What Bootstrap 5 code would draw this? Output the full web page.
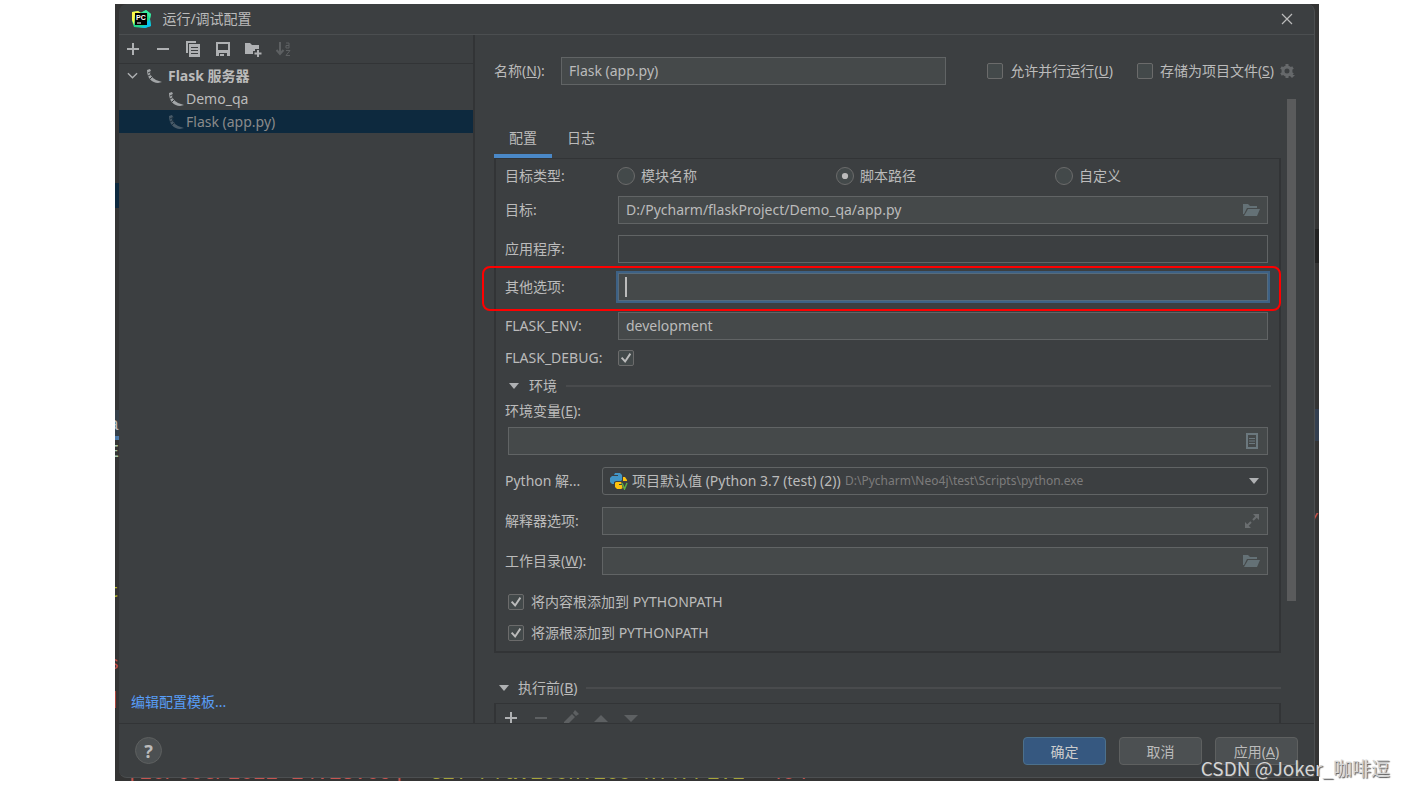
<!DOCTYPE html>
<html lang="zh-CN">
<head>
<meta charset="utf-8">
<meta name="viewport" content="width=device-width, initial-scale=1">
<title>运行/调试配置</title>
<link href="https://cdn.jsdelivr.net/npm/bootstrap@5.3.0/dist/css/bootstrap.min.css" rel="stylesheet">
<script src="https://cdn.jsdelivr.net/npm/bootstrap@5.3.0/dist/js/bootstrap.bundle.min.js" defer></script>
<style>
  :root { --panel: #3c3f41; --line: #323436; --edge: #616465; --field: #45494a; --ink: #bbbbbb; --dim: #8a8a8a; --font: "Noto Sans", "Noto Sans CJK SC", sans-serif; }
  body { background: #fff; color: var(--ink); font: 14px/20px var(--font); }
  .page-shell { padding: 4px 85px 7px 115px; min-height: 100vh; }
  .backdrop { background: #343434; padding: 0 4px 3px; min-height: calc(100vh - 11px); overflow: hidden; }
  .dialog-win { background: var(--panel); border-radius: 8px; height: calc(100vh - 14px); min-height: 560px; border: 0 solid #4c4f51; border-width: 0 1px 1px 0; z-index: 1; }

  /* Editor content showing round the edge of the dialog */
  .peek { position: absolute; display: flex; justify-content: flex-end; font: 18px/20px "Liberation Mono", monospace; white-space: pre; width: 4px; overflow: hidden; }
  .peek-l { left: 0; }
  .peek-r { right: 0; }
  .console-line { position: absolute; left: 12px; bottom: -5px; font: 21px/24px "Liberation Mono", monospace; white-space: pre; color: #a8a53a; }
  .red { color: #c75450; }

  .title-bar { height: 31px; flex: none; padding: 0 20px 0 12px; border-bottom: 1px solid #4b4e50; }
  .plain-btn { background: none; border: 0; padding: 0; color: inherit; display: flex; line-height: 0; }
  .side-pane { flex: 0 0 356px; border-right: 2px solid var(--line); padding-bottom: 11px; }
  .tool-strip { height: 29px; padding: 0 6px; gap: 14px; border-bottom: 1px solid var(--line); }
  .tree-row { height: 23px; line-height: 23px; }
  .tree-row.chosen { background: #0d293e; color: var(--dim); }
  .tree-child { padding-left: 49px; }
  .edit-link { color: #589df6; text-decoration: none; padding-left: 12px; }

  .main-pane { padding: 22px 18px 0 19px; overflow: hidden; min-width: 0; min-height: 0; }
  .name-label { flex: 0 0 67px; }
  .name-box { margin-right: 41px; }
  .field { background: var(--field); border: 1px solid var(--edge); border-radius: 0; color: var(--ink); font: 14px/20px var(--font); height: 28px; padding: 0 7px 2px; min-width: 0; width: 100%; }
  .field.bare { background: var(--panel); }
  .field:focus { outline: none; }
  .field.lit { outline: 2px solid #3d6185; outline-offset: 0; border-color: #566b7c; }
  .field-icon { position: absolute; right: 8px; top: 6px; }
  .form-check-input.tick { width: 16px; height: 16px; margin: 0 7px 0 0; background-color: #43494a; border: 1px solid #6b6b6b; border-radius: 2px; flex: none; box-shadow: none; }
  .form-check-input.tick[type=radio] { width: 18px; height: 18px; margin-right: 6px; border-radius: 50%; }
  .form-check-input.tick:checked { background-color: #43494a; border-color: #6b6b6b; }
  .form-check-input.tick[type=checkbox]:checked { background-image: url("data:image/svg+xml,%3csvg xmlns='http://www.w3.org/2000/svg' viewBox='0 0 16 16'%3e%3cpath d='M3 7.500l4 4.500L13 3' fill='none' stroke='%23bbb' stroke-width='2.200'/%3e%3c/svg%3e"); background-size: 14px 14px; }
  .form-check-input.tick[type=radio]:checked { background-image: url("data:image/svg+xml,%3csvg xmlns='http://www.w3.org/2000/svg' viewBox='0 0 18 18'%3e%3ccircle cx='9' cy='9' r='3.500' fill='%23bbb'/%3e%3c/svg%3e"); }

  .scroll-area { margin-top: 14px; gap: 6px; }
  .thumb { flex: 0 0 9px; height: 502px; background: #5a5b5c; }
  .tab-row { margin-top: 27px; }
  .tab-row .nav-link { color: var(--ink); border: 0; border-radius: 0; padding: 2px 15px 9px; height: 32px; }
  .tab-row .nav-link.active { color: var(--ink); box-shadow: inset 0 -4px #4a88c7; }
  .tab-body { border: 2px solid var(--line); border-top-width: 1px; padding: 3px 11px 8px 9px; }
  .line { display: flex; align-items: center; min-height: 28px; position: relative; }
  .line-text { display: flex; align-items: center; height: 20px; }
  .wide-label { flex: 0 0 113px; }
  .mid-label { flex: 0 0 97px; white-space: nowrap; }
  .kinds { margin: 0 -6px 0 -1px; }
  .mt-5px { margin-top: 5px; }
  .mt-6px { margin-top: 6px; }
  .mt-10px { margin-top: 10px; }
  .mt-11px { margin-top: 11px; }
  .mt-12px { margin-top: 12px; }
  .mt-17px { margin-top: 17px; }
  .indent { padding-left: 3px; }
  .marked::before { content: ""; position: absolute; inset: -7px -13px -10px -23px; border: 2px solid #f00; border-radius: 8px; pointer-events: none; z-index: 2; }
  .caret { position: absolute; left: 7px; top: 4px; width: 2px; height: 20px; background: #bbb; }
  .rule { flex: 1; height: 2px; background: #494b4d; }
  .env-head { gap: 9px; padding-left: 3px; margin-right: -3px; }
  .before-head { margin-top: 25px; padding-left: 4px; }
  .before-box { border: 2px solid var(--line); border-width: 1px 2px 0; height: 40px; margin-top: 5px; padding: 6px 7px; gap: 14px; }
  .picker { border: 1px solid var(--edge); border-radius: 3px; height: 28px; padding: 0 7px; }
  .picker select { appearance: none; background: none; border: 0; padding: 0; color: var(--ink); font: 14px/20px var(--font); }
  .picker-path { font-size: 12px; color: #7c7c7c; margin-left: 4px; }

  .foot-bar { flex: none; height: 54px; border-top: 1px solid var(--line); padding: 0 16px; gap: 13px; }
  .btn.act { --bs-btn-color: #bbb; --bs-btn-bg: #4c5052; --bs-btn-border-color: #5e6060; --bs-btn-hover-color: #ddd; --bs-btn-hover-bg: #565a5c; --bs-btn-border-radius: 4px; width: 83px; height: 28px; padding: 1px 0 0; font-size: 14px; line-height: 26px; }
  .btn.act.go { --bs-btn-bg: #365880; --bs-btn-border-color: #4c708c; --bs-btn-color: #ccc; }
  .help-btn { width: 27px; height: 27px; border-radius: 50%; background: #4c5052; border: 1px solid #5e6060; color: #bbb; font: bold 18px/20px var(--font); padding: 0; }
  .watermark { position: absolute; right: 14px; bottom: 7px; font: 19px/26px "Noto Sans CJK SC", sans-serif; color: #d4d4d4; text-shadow: 1px 1px 1px #555; z-index: 5; }
</style>
</head>
<body>
<div class="page-shell position-relative">
<main class="backdrop position-relative">
  <div aria-hidden="true">
    <span class="peek peek-l" style="top:179px;height:25px;background:#0d293e"></span>
    <span class="peek peek-l" style="top:406px;height:26px;background:#35404a"></span>
    <span class="peek peek-l" style="top:432px;height:4px;background:#4a78a8"></span>
    <span class="peek peek-l" style="top:411px"><span>a</span></span>
    <span class="peek peek-l" style="top:438px;color:#a5c9b0"><span>E</span></span>
    <span class="peek peek-l" style="top:472px;color:#7fb09a"><span class="pe-1">:</span></span>
    <span class="peek peek-l" style="top:578px;color:#b5c422"><span>t</span></span>
    <span class="peek peek-l red" style="top:650px"><span>s</span></span>
    <span class="peek peek-l red" style="top:685px"><span>]</span></span>
    <span class="peek peek-r" style="top:225px;height:34px;background:#222"></span>
    <span class="peek peek-r" style="top:405px;height:32px;background:#333f50"></span>
    <span class="peek peek-r red" style="top:507px"><span>/</span></span>
    <div class="console-line"><span class="red">[20/Oct/2022 14:13:09]</span> "GET /favicon.ico HTTP/1.1" <span class="red">404</span></div>
  </div>
  <section class="dialog-win position-relative d-flex flex-column" aria-labelledby="dlg-title">
    <header class="title-bar d-flex align-items-center">
      <svg width="22" height="20" viewBox="0 0 22 20" aria-hidden="true"><path d="M1 3l6-1 3 2 5-3 5 4-1 5 1 7-6 2-11-1-2-6z" fill="#21d789"/><path d="M9 4l6-3 5 4-1 5-3-6z" fill="#3be8a0"/><path d="M1 3l6-1 3 2-6 2-1 10-2-5z" fill="#fcf84a"/><path d="M16 13l3-3 1 7-6 2-6-1 8-2z" fill="#07c3f2"/><path d="M4 4h12v12H4z" fill="#000"/><text x="5" y="11" font-size="7" font-weight="bold" fill="#fff" font-family="Liberation Sans">PC</text><path d="M6 14h4" stroke="#fff"/></svg>
      <span id="dlg-title" class="ms-2 me-auto pe-1">&#8202;运行/调试配置</span>
      <button class="plain-btn" aria-label="关闭"><svg width="14" height="14" viewBox="0 0 14 14" stroke="#bbb" fill="none" stroke-width="1.200"><path d="M2 2l10 10M12 2L2 12"/></svg></button>
    </header>

    <div class="d-flex flex-grow-1 overflow-hidden">
      <nav class="side-pane d-flex flex-column">
        <div class="tool-strip d-flex align-items-center">
          <button class="plain-btn" aria-label="添加"><svg width="16" height="16" viewBox="0 0 16 16" stroke="#afb1b3" stroke-width="2"><path d="M8 2v12M2 8h12"/></svg></button>
          <button class="plain-btn" aria-label="删除"><svg width="16" height="16" viewBox="0 0 16 16" stroke="#afb1b3" stroke-width="2"><path d="M2 8h12"/></svg></button>
          <button class="plain-btn" aria-label="复制"><svg width="16" height="16" viewBox="0 0 16 16"><path d="M1 0h10v2H3v10H1z" fill="#afb1b3"/><path d="M4 3h11v13H4z" fill="#afb1b3"/><path d="M6 6.500h7M6 9.500h7M6 12.500h7" stroke="#3c3f41"/></svg></button>
          <button class="plain-btn" aria-label="保存"><svg width="16" height="16" viewBox="0 0 16 16"><path d="M1 1h14v14H1z" fill="#afb1b3"/><path d="M3 3h10v6H3zM4 12h8v3H4z" fill="#3c3f41"/><path d="M5 13h4v2H5z" fill="#afb1b3"/></svg></button>
          <button class="plain-btn" aria-label="新建文件夹"><svg width="17" height="16" viewBox="0 0 17 16"><path d="M0 2h5l2 2h7v4h-4v2H8v3H0z" fill="#afb1b3"/><path d="M13 9v7M9.500 12.500h7" stroke="#afb1b3" stroke-width="2"/></svg></button>
          <button class="plain-btn" aria-label="排序" disabled><svg width="16" height="16" viewBox="0 0 16 16" fill="none" stroke="#5d6062"><path d="M4 1v12M0.500 9l3.500 4 3.500-4" stroke-width="2"/><path d="M10 2h3v5h-3V4.500h3M10 9.500h4l-4 5h4"/></svg></button>
        </div>
        <div class="tree-row d-flex align-items-center fw-bold ps-2">
          <svg class="me-2" width="11" height="12" viewBox="0 0 12 12" fill="none" stroke="#afb1b3" stroke-width="1.500"><path d="M1 3l5 5 5-5"/></svg>
          <svg width="18" height="16" viewBox="0 0 18 16"><use href="#horn"/></svg><span class="ms-1">Flask 服务器</span>
        </div>
        <div class="tree-row tree-child d-flex align-items-center"><svg width="18" height="16" viewBox="0 0 18 16"><use href="#horn"/></svg>Demo_qa</div>
        <div class="tree-row tree-child chosen d-flex align-items-center"><svg width="18" height="16" viewBox="0 0 18 16" opacity=".4"><use href="#horn"/></svg>Flask (app.py)</div>
        <a class="edit-link mt-auto" href="#">编辑配置模板...</a>
      </nav>

      <form class="main-pane flex-grow-1">
        <div class="d-flex align-items-center">
          <label for="cfg-name" class="name-label">名称(<u>N</u>):</label>
          <div class="name-box flex-grow-1"><input id="cfg-name" class="field d-block" value="Flask (app.py)"></div>
          <input id="par" type="checkbox" class="form-check-input tick"><label for="par" class="me-4">允许并行运行(<u>U</u>)</label>
          <input id="sto" type="checkbox" class="form-check-input tick"><label for="sto">存储为项目文件(<u>S</u>)</label>
          <button type="button" class="plain-btn ms-1" aria-label="存储选项"><svg width="18" height="18" viewBox="0 0 18 18"><circle cx="9" cy="9" r="4" fill="none" stroke="#66696b" stroke-width="3"/><path d="M9 2v3M9 13v3M3 5.500L5.500 7M12.500 11l2.500 1.500M3 12.500L5.500 11M12.500 7L15 5.500" stroke="#66696b" stroke-width="3"/><path d="M11 13h6l-3 3z" fill="#66696b"/></svg></button>
        </div>
        <div class="scroll-area d-flex align-items-start">
          <div class="flex-grow-1">
            <ul class="nav tab-row">
              <li class="nav-item"><a class="nav-link active" href="#">配置</a></li>
              <li class="nav-item"><a class="nav-link" href="#">日志</a></li>
            </ul>
            <div class="tab-body">
              <div class="line"><span class="wide-label">目标类型:</span>
                <div class="kinds d-flex flex-grow-1">
                  <div class="col-4 d-flex align-items-center"><input class="form-check-input tick" type="radio" name="kind" id="k1"><label for="k1">模块名称</label></div>
                  <div class="col-4 d-flex align-items-center"><input class="form-check-input tick" type="radio" name="kind" id="k2" checked><label for="k2">脚本路径</label></div>
                  <div class="col-4 d-flex align-items-center"><input class="form-check-input tick" type="radio" name="kind" id="k3"><label for="k3">自定义</label></div>
                </div>
              </div>
              <div class="line mt-6px"><label class="wide-label" for="target">目标:</label><input id="target" class="field" value="D:/Pycharm/flaskProject/Demo_qa/app.py"><svg class="field-icon" width="17" height="16" viewBox="0 0 17 16"><use href="#folder"/></svg></div>
              <div class="line mt-11px"><label class="wide-label" for="appl">应用程序:</label><input id="appl" class="field bare"></div>
              <div class="line marked mt-10px"><label class="wide-label" for="opts">其他选项:</label><div class="position-relative flex-grow-1"><input id="opts" class="field lit d-block"><span class="caret"></span></div></div>
              <div class="line mt-11px"><label class="wide-label" for="fenv">FLASK_ENV:</label><input id="fenv" class="field" value="development"></div>
              <div class="line mt-1"><label class="wide-label" for="fdbg">FLASK_DEBUG:</label><input id="fdbg" type="checkbox" class="form-check-input tick" checked></div>
              <div class="line-text env-head mt-1"><svg width="12" height="12" viewBox="0 0 12 12"><path d="M1 3h10L6 9z" fill="#afb1b3"/></svg><span>环境</span><span class="rule"></span></div>
              <label class="line-text mt-5px" for="vars">环境变量(<u>E</u>):</label>
              <div class="line mt-6px indent"><input id="vars" class="field"><svg class="field-icon" width="16" height="16" viewBox="0 0 16 16" fill="none" stroke="#6b787e"><path d="M3 1h10v14H3z" stroke-width="2"/><path d="M5 5.500h6M5 8h6M5 10.500h6"/></svg></div>
              <div class="line mt-12px"><label class="mid-label" for="interp">Python 解...</label>
                <div class="picker d-flex align-items-center flex-grow-1">
                  <svg width="18" height="18" viewBox="0 0 18 18" class="me-1"><path d="M5 1h5l2 2v5l-1 1H6L4 10v2H2L0 10V6l2-2h6V3H4z" fill="#4294c4"/><path d="M13 5h2l2 3v3l-2 1H9v1h4v3l-2 1H7l-2-2v-4l1-1h6l1-1z" fill="#ffc20e"/><path d="M11 9h7l-2 9h-3z" fill="#3c3f41"/><path d="M12 11l2.500 6 2.500-6" stroke="#5fad44" stroke-width="1.500" fill="none"/></svg>
                  <select id="interp"><option>项目默认值 (Python 3.7 (test) (2))</option></select>
                  <span class="picker-path">D:\Pycharm\Neo4j\test\Scripts\python.exe</span>
                  <svg class="ms-auto" width="12" height="12" viewBox="0 0 12 12"><path d="M1 3h10L6 9z" fill="#afb1b3"/></svg>
                </div>
              </div>
              <div class="line mt-12px"><label class="mid-label" for="iopt">解释器选项:</label><input id="iopt" class="field"><svg class="field-icon" width="16" height="16" viewBox="0 0 16 16" fill="#6a6e70" stroke="#6a6e70"><path d="M9 1h6v6zM1 9v6h6z" stroke="none"/><path d="M9 7l4-4M7 9l-4 4" stroke-width="2"/></svg></div>
              <div class="line mt-12px"><label class="mid-label" for="wdir">工作目录(<u>W</u>):</label><input id="wdir" class="field"><svg class="field-icon" width="17" height="16" viewBox="0 0 17 16"><use href="#folder"/></svg></div>
              <div class="line-text mt-17px indent"><input id="p1" type="checkbox" class="form-check-input tick" checked><label for="p1">将内容根添加到 PYTHONPATH</label></div>
              <div class="line-text mt-11px indent"><input id="p2" type="checkbox" class="form-check-input tick" checked><label for="p2">将源根添加到 PYTHONPATH</label></div>
            </div>
            <div class="before-head line-text"><svg class="me-2" width="12" height="12" viewBox="0 0 12 12"><path d="M1 3h10L6 9z" fill="#afb1b3"/></svg><span class="me-2">执行前(<u>B</u>)</span><span class="rule"></span></div>
            <div class="before-box d-flex">
              <button type="button" class="plain-btn" aria-label="添加任务"><svg width="16" height="16" viewBox="0 0 16 16" stroke="#afb1b3" stroke-width="2"><path d="M8 2v12M2 8h12"/></svg></button>
              <button type="button" class="plain-btn" aria-label="删除任务" disabled><svg width="16" height="16" viewBox="0 0 16 16" stroke="#5d6062" stroke-width="2"><path d="M2 8h12"/></svg></button>
              <button type="button" class="plain-btn" aria-label="编辑任务" disabled><svg width="16" height="16" viewBox="0 0 16 16" fill="#5d6062"><path d="M1 12l8-8 3 3-8 8H1zM10 3l2-3 4 4-3 2z"/></svg></button>
              <button type="button" class="plain-btn" aria-label="上移" disabled><svg width="16" height="16" viewBox="0 0 16 16" fill="#5d6062"><path d="M1 12h14L8 5z"/></svg></button>
              <button type="button" class="plain-btn" aria-label="下移" disabled><svg width="16" height="16" viewBox="0 0 16 16" fill="#5d6062"><path d="M1 5h14l-7 7z"/></svg></button>
            </div>
          </div>
          <div class="thumb"></div>
        </div>
      </form>
    </div>

    <footer class="foot-bar d-flex align-items-center">
      <button class="help-btn me-auto" aria-label="帮助">?</button>
      <button class="btn act go">确定</button>
      <button class="btn act">取消</button>
      <button class="btn act">应用(<u>A</u>)</button>
    </footer>
  </section>
</main>
<div class="watermark">CSDN @Joker_咖啡逗</div>
</div>
<svg width="0" height="0" class="position-absolute" aria-hidden="true"><defs>
  <g id="horn"><path d="M1 2l3-1 1 2-1 2c1 4 5 7 9 8l3 1-4 1C6 15 1 10 1 2z" fill="#a2a5a7"/><path d="M2 5l4-2M2 8l4-2M4 11l3-3" stroke="#3c3f41"/></g>
  <g id="folder" fill="#647176"><path d="M0 2h5l2 2h7v2H4l-3 6H0z"/><path d="M5 7h12l-3 7H1z"/></g>
</defs></svg>
</body>
</html>
